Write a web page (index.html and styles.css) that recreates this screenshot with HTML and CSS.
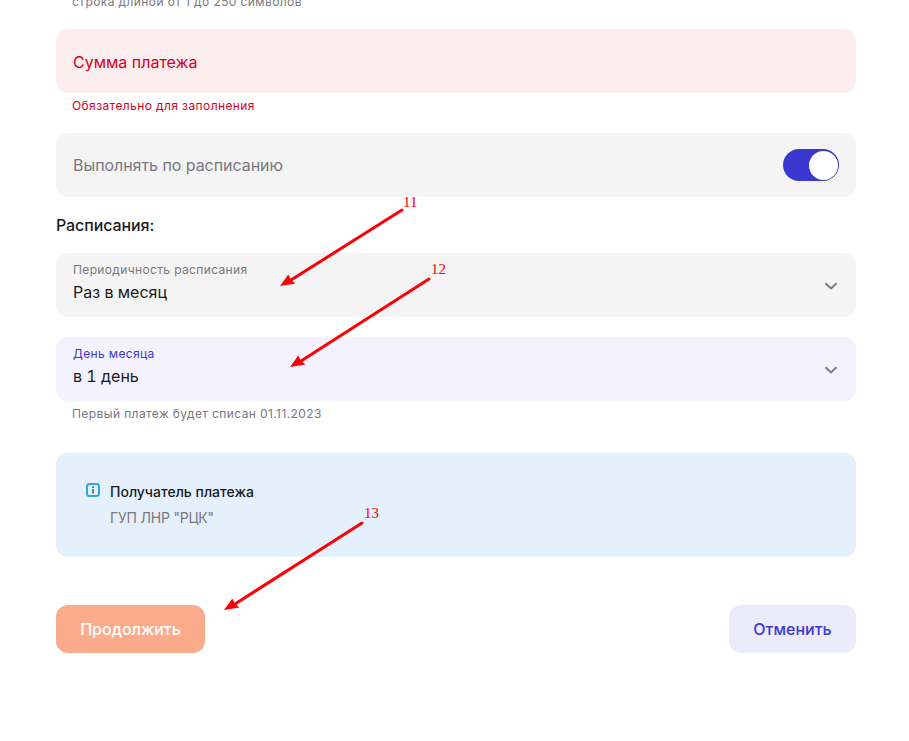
FILE: index.html
```html
<!DOCTYPE html>
<html lang="ru">
<head>
<meta charset="utf-8">
<title>Платёж</title>
<link rel="stylesheet" href="styles.css">
</head>
<body>
<main class="form">
  <p class="hint hint-top">строка длиной от 1 до 250 символов</p>

  <div class="field field-error"><span class="field-text">Сумма платежа</span></div>
  <p class="hint hint-error">Обязательно для заполнения</p>

  <div class="field field-toggle">
    <span class="field-text muted">Выполнять по расписанию</span>
    <span class="toggle"><span class="knob"></span></span>
  </div>

  <h2 class="heading">Расписания:</h2>

  <div class="field select">
    <div class="select-body">
      <span class="select-label">Периодичность расписания</span>
      <span class="select-value">Раз в месяц</span>
    </div>
    <svg class="chevron" width="14" height="8" viewBox="0 0 14 8"><path d="M1.5 1.2 7 6.4l5.5-5.2" fill="none" stroke="#7b7b80" stroke-width="2"/></svg>
  </div>

  <div class="field select select-active">
    <div class="select-body">
      <span class="select-label">День месяца</span>
      <span class="select-value">в 1 день</span>
    </div>
    <svg class="chevron" width="14" height="8" viewBox="0 0 14 8"><path d="M1.5 1.2 7 6.4l5.5-5.2" fill="none" stroke="#7b7b80" stroke-width="2"/></svg>
  </div>
  <p class="hint hint-date">Первый платеж будет списан 01.11.2023</p>

  <section class="info">
    <svg class="info-icon" width="14" height="14" viewBox="0 0 14 14"><rect x="1" y="1" width="12" height="12" rx="2.5" fill="none" stroke="#2fa8e0" stroke-width="2"/><rect x="6.2" y="3.4" width="1.7" height="1.6" fill="#2b6f9a"/><rect x="6.2" y="6" width="1.7" height="4.4" fill="#2b6f9a"/></svg>
    <div>
      <div class="info-title">Получатель платежа</div>
      <div class="info-text">ГУП ЛНР "РЦК"</div>
    </div>
  </section>

  <div class="actions">
    <button class="btn btn-primary" type="button">Продолжить</button>
    <button class="btn btn-secondary" type="button">Отменить</button>
  </div>
</main>

<svg class="notes" width="909" height="741" viewBox="0 0 909 741">
  <g stroke="#fb0007" stroke-width="3" fill="none" stroke-linecap="round">
    <path d="M402 210 291 280"/>
    <path d="M429 279 301 361"/>
    <path d="M362 523 235 604"/>
  </g>
  <g fill="#fb0007">
    <path d="M280 286 288.3 274.5 291 280 295.5 283.5Z"/>
    <path d="M290 367 298.3 355.5 301 361 305.5 364.5Z"/>
    <path d="M224 610 232.3 598.5 235 604 239.5 607.5Z"/>
  </g>
  <g class="note-text" fill="#fb0007">
    <text x="403" y="207">11</text>
    <text x="431" y="274">12</text>
    <text x="364" y="518">13</text>
  </g>
</svg>
</body>
</html>
```
FILE: styles.css
```css
* { box-sizing: border-box; }
html, body { margin: 0; height: 741px; overflow: hidden; background: #fff; }
body { font-family: Inter, "Noto Sans", sans-serif; color: #1b1b1f; position: relative; }
.form { width: 800px; margin-left: 56px; margin-top: -6px; display: flex; flex-direction: column; }
.hint { margin: 0; padding-left: 16px; font-size: 12px; line-height: 16px; letter-spacing: .4px; color: #78787d; }
.hint-top { margin-bottom: 19px; }
.hint-error { margin-top: 5px; margin-bottom: 19px; color: #d6001c; }
.hint-date { margin-top: 5px; margin-bottom: 31px; }
.field { height: 64px; border-radius: 12px; background: #f4f4f4; padding: 0 17px; display: flex; align-items: center; justify-content: space-between; }
.field-error { background: #fcedee; color: #d6001c; padding-top: 2px; }
.field-text { font-size: 16px; line-height: 24px; }
.muted { color: #78787d; letter-spacing: -.05px; }
.toggle { width: 56px; height: 32px; border-radius: 16px; background: #3b38d1; display: flex; align-items: center; justify-content: flex-end; padding-right: 1px; }
.knob { width: 29px; height: 29px; border-radius: 50%; background: #fff; }
.heading { margin: 20px 0 20px; font-size: 16px; line-height: 16px; font-weight: 500; letter-spacing: -.1px; color: #1b1b1f; }
.select { margin-bottom: 20px; padding-right: 18px; }
.select-active { background: #f4f2fe; margin-bottom: 0; }
.select-body { display: flex; flex-direction: column; padding-bottom: 4px; }
.select-label { font-size: 12px; line-height: 16px; letter-spacing: .36px; color: #78787d; margin-bottom: 2px; }
.select-active .select-label { color: #3b38d1; }
.select-value { font-size: 16px; line-height: 24px; font-feature-settings: "tnum"; }
.chevron { margin-top: 2px; }
.info { height: 104px; border-radius: 12px; background: #e4f0fc; padding: 30px 30px; display: flex; gap: 10px; align-items: flex-start; }
.info-icon { flex: none; }
.info-title { font-size: 14px; line-height: 18px; font-weight: 500; color: #1b1b1f; margin-bottom: 8px; }
.info-text { font-size: 14px; line-height: 18px; color: #78787d; letter-spacing: -.2px; }
.actions { margin-top: 48px; display: flex; justify-content: space-between; }
.btn { height: 48px; border: 0; border-radius: 12px; font-family: inherit; font-size: 16px; font-weight: 500; }
.btn-primary { width: 149px; background: #f9ab8c; color: #fff; }
.btn-secondary { width: 127px; background: #ecebfa; color: #3b38d1; }
.notes { position: absolute; left: 0; top: 0; pointer-events: none; }
.note-text { font-family: "Liberation Serif", serif; font-size: 15px; }
```
